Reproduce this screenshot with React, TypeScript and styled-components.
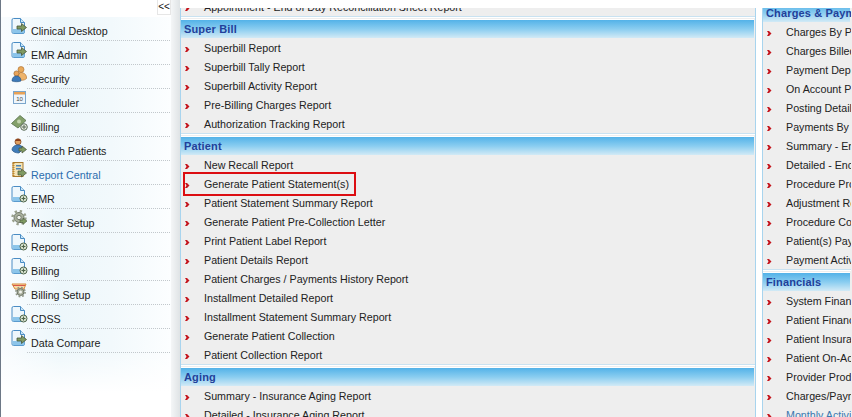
import styled, { createGlobalStyle } from 'styled-components'

const GlobalStyle = createGlobalStyle`
  html, body {
    margin: 0;
    padding: 0;
    background: #fff;
    overflow: hidden;
  }
`

const Page = styled.div`
  display: flex;
  width: 852px;
  height: 417px;
  overflow: hidden;
  font-family: 'Liberation Sans', Arial, sans-serif;
  font-size: 10.7px;
`

const Sidebar = styled.div`
  width: 171px;
  flex: none;
  box-sizing: border-box;
  border-left: 1px solid #6d7886;
  background: #fff;
`

const ToggleBar = styled.div`
  display: flex;
  justify-content: flex-end;
  height: 17px;
`

const Toggle = styled.div`
  width: 14px;
  height: 15px;
  box-sizing: border-box;
  border: 1px solid #e6e6e6;
  border-top: 0;
  color: #111;
  font-size: 10px;
  line-height: 14px;
  text-align: center;
`

const NavList = styled.div`
  padding-bottom: 40px;
  background:
    linear-gradient(to bottom, rgba(255, 255, 255, 0) 88%, #fff 100%),
    linear-gradient(to right, #f9fcfe 0, #edf7fb 35%, #f2f9fc 65%, #fcfeff 100%);
`

const NavRow = styled.div`
  display: flex;
  height: 24px;
  padding-left: 10px;
`

const NavIcon = styled.svg`
  width: 17px;
  height: 17px;
  flex: none;
  margin-top: 1px;
  margin-right: -1px;
`

const NavLabel = styled.div<{ $active?: boolean }>`
  flex: 1;
  margin-right: 1px;
  padding: 8px 0 0 4px;
  box-sizing: border-box;
  height: 24px;
  border-bottom: 1px dotted #c2c8cc;
  line-height: 13px;
  color: ${(p) => (p.$active ? '#2b6cad' : '#1b1b1b')};
  white-space: nowrap;
`

const Shade = styled.div`
  width: 9px;
  flex: none;
  background: linear-gradient(to right, #f4f6f7, #dfe3e5);
`

const Content = styled.div`
  display: flex;
  flex: 1;
  gap: 6px;
  padding-top: 8px;
  min-width: 0;
`

const Column = styled.div<{ $wide?: boolean }>`
  ${(p) => (p.$wide ? 'width: 576px; flex: none;' : 'flex: 1; min-width: 0;')}
  box-sizing: border-box;
  border-left: 1px solid #a8d4ee;
  border-right: 1px solid ${(p) => (p.$wide ? '#a8d4ee' : 'transparent')};
  overflow: hidden;
  background: #eeeeee;
`

const ColumnInner = styled.div<{ $offset: number }>`
  margin-top: ${(p) => p.$offset}px;
`

const Section = styled.div`
  border-bottom: 1px solid #c9e2f1;
  margin-bottom: 2px;
  box-shadow: 0 1px 0 #fff;
`

const SectionHead = styled.div`
  height: 19px;
  box-sizing: border-box;
  margin-right: 1px;
  padding-left: 3px;
  border-top: 1px solid #fff;
  line-height: 18px;
  font-size: 11px;
  letter-spacing: 0.15px;
  font-weight: bold;
  color: #22409a;
  white-space: nowrap;
  background: linear-gradient(to bottom, #53b2e8 0, #8acdf0 50%, #d2eaf6 100%);
`

const ReportRow = styled.div<{ $link?: boolean }>`
  position: relative;
  display: flex;
  align-items: center;
  height: 19px;
  padding-left: 4px;
  color: ${(p) => (p.$link ? '#3a78b0' : '#222')};
  white-space: nowrap;
`

const Bullet = styled.svg`
  width: 5px;
  height: 5px;
  flex: none;
  margin-top: 3px;
  margin-right: 14px;
`

const Highlight = styled.div`
  position: absolute;
  left: 2px;
  top: -2px;
  width: 173px;
  height: 24px;
  box-sizing: border-box;
  border: 2px solid #dc0d12;
`

function DocBase() {
  return (
    <>
      <path d="M2.500.5h7l4 4v9.500a1.500 1.500 0 0 1-1.500 1.500H2.500A1.500 1.500 0 0 1 1 14V2A1.500 1.500 0 0 1 2.500.5z" fill="#eef7fc" stroke="#4a8cc4" />
      <path d="M9.500.5v4h4" fill="#c9e5f6" stroke="#4a8cc4" />
      <path d="M1.500 11h12v3.200a1 1 0 0 1-1 1h-10a1 1 0 0 1-1-1z" fill="#8cc5ea" />
    </>
  )
}

function DocArrow() {
  return (
    <NavIcon viewBox="0 0 17 17">
      <DocBase />
      <path d="M6 8h4.500V5.500L15.500 9.500l-5 4V11H6z" fill="#7f9a62" stroke="#47553a" strokeWidth="0.8" />
    </NavIcon>
  )
}

function DocPlus() {
  return (
    <NavIcon viewBox="0 0 17 17">
      <DocBase />
      <circle cx="12.500" cy="12.500" r="3.500" fill="#dfe9d8" stroke="#4d6348" />
      <path d="M12.500 10.500v4M10.500 12.500h4" stroke="#4d6348" strokeWidth="1.200" />
    </NavIcon>
  )
}

function People() {
  return (
    <NavIcon viewBox="0 0 17 17">
      <circle cx="10" cy="3.500" r="3" fill="#e8a95a" stroke="#a9692a" strokeWidth="0.6" />
      <path d="M7 13c-.5-4 1-6.500 3-6.500S16 8 15.500 12.500c-2 2-6 2.500-8.500.5z" fill="#eeb46c" stroke="#a9692a" strokeWidth="0.6" />
      <circle cx="5.500" cy="7.500" r="2.600" fill="#e9a45a" stroke="#8f5a25" strokeWidth="0.6" />
      <path d="M1 15c0-3.500 2-5 4.500-5S10 11.500 10 15c-2 1-6.500 1-9 0z" fill="#3d79b8" stroke="#24507f" strokeWidth="0.6" />
    </NavIcon>
  )
}

function CalendarIcon() {
  return (
    <NavIcon viewBox="0 0 17 17">
      <rect x="2.500" y="1.500" width="12" height="12" fill="#eef5fb" stroke="#7ba6cc" />
      <rect x="3" y="2" width="11" height="2.500" fill="#e8a257" />
      <text x="8.500" y="11" fontSize="6" fontFamily="'Liberation Sans', sans-serif" textAnchor="middle" fill="#444">10</text>
    </NavIcon>
  )
}

function Money() {
  return (
    <NavIcon viewBox="0 0 17 17">
      <path d="M0.500 9.500L9 1.500l6 5-8 7.500z" fill="#83a06a" stroke="#56704a" strokeWidth="0.8" />
      <circle cx="8" cy="7.500" r="2" fill="#c3d4ae" />
      <circle cx="13" cy="13" r="3.300" fill="#e9efe3" stroke="#5a6a58" />
      <path d="M13 11v4M11 13h4" stroke="#5a6a58" />
    </NavIcon>
  )
}

function UserArrow() {
  return (
    <NavIcon viewBox="0 0 17 17">
      <circle cx="7" cy="3.800" r="3" fill="#e0a060" stroke="#85481f" strokeWidth="0.8" />
      <path d="M7 1a3 3 0 0 1 3 2H4a3 3 0 0 1 3-2z" fill="#8b3f1a" />
      <path d="M1 12c0-3 2.500-5 6-5s5 2 5 4l-4 4c-3 0-6-1-7-3z" fill="#3f7cb9" stroke="#2a5685" strokeWidth="0.7" />
      <path d="M8 10h3V8l4.500 3.500-4.500 3.500v-2H8z" fill="#7f9a62" stroke="#47553a" strokeWidth="0.7" />
    </NavIcon>
  )
}

function ReportBook() {
  return (
    <NavIcon viewBox="0 0 17 17">
      <rect x="2" y="0.500" width="10" height="14" fill="#f4e4b6" stroke="#a8792d" />
      <path d="M2.500 1v13" stroke="#c58a2a" strokeWidth="2" strokeDasharray="1 1" />
      <rect x="5" y="3" width="5" height="1.500" fill="#4f84b4" />
      <rect x="5" y="6" width="5" height="1.500" fill="#4f84b4" />
      <path d="M7 9h3.500V7L15.500 11l-5 4v-2H7z" fill="#7f9a62" stroke="#47553a" strokeWidth="0.7" />
    </NavIcon>
  )
}

function Gear() {
  return (
    <NavIcon viewBox="0 0 17 17">
      <circle cx="8" cy="7.500" r="5" fill="#a9b09d" stroke="#747b6c" />
      <circle cx="8" cy="7.500" r="6.500" fill="none" stroke="#9aa18e" strokeWidth="2.400" strokeDasharray="2.300 2.800" />
      <circle cx="8" cy="7.500" r="2.200" fill="#eef0ea" stroke="#747b6c" />
      <path d="M9 10h3V8l4 3-4 3.500V12.500H9z" fill="#7f9a62" stroke="#47553a" strokeWidth="0.6" />
    </NavIcon>
  )
}

function BillGear() {
  return (
    <NavIcon viewBox="0 0 17 17">
      <path d="M1 2h14L13 7H4z" fill="#f6d9a6" stroke="#d88a3d" />
      <path d="M2 3.500h12" stroke="#d9584a" />
      <circle cx="9.500" cy="10" r="3.500" fill="#a5ab98" stroke="#6e7567" />
      <circle cx="9.500" cy="10" r="4.600" fill="none" stroke="#8f9686" strokeWidth="1.600" strokeDasharray="1.800 1.800" />
      <circle cx="9.500" cy="10" r="1.500" fill="#f2f3ee" />
    </NavIcon>
  )
}

const navItems = [
  { label: 'Clinical Desktop', icon: <DocArrow /> },
  { label: 'EMR Admin', icon: <DocArrow /> },
  { label: 'Security', icon: <People /> },
  { label: 'Scheduler', icon: <CalendarIcon /> },
  { label: 'Billing', icon: <Money /> },
  { label: 'Search Patients', icon: <UserArrow /> },
  { label: 'Report Central', icon: <ReportBook />, active: true },
  { label: 'EMR', icon: <DocPlus /> },
  { label: 'Master Setup', icon: <Gear /> },
  { label: 'Reports', icon: <DocPlus /> },
  { label: 'Billing', icon: <DocPlus /> },
  { label: 'Billing Setup', icon: <BillGear /> },
  { label: 'CDSS', icon: <DocPlus /> },
  { label: 'Data Compare', icon: <DocArrow /> },
]

type Group = { title?: string; rows: string[] }

const leftGroups: Group[] = [
  { rows: ['Appointment - End of Day Reconciliation Sheet Report'] },
  {
    title: 'Super Bill',
    rows: [
      'Superbill Report',
      'Superbill Tally Report',
      'Superbill Activity Report',
      'Pre-Billing Charges Report',
      'Authorization Tracking Report',
    ],
  },
  {
    title: 'Patient',
    rows: [
      'New Recall Report',
      'Generate Patient Statement(s)',
      'Patient Statement Summary Report',
      'Generate Patient Pre-Collection Letter',
      'Print Patient Label Report',
      'Patient Details Report',
      'Patient Charges / Payments History Report',
      'Installment Detailed Report',
      'Installment Statement Summary Report',
      'Generate Patient Collection',
      'Patient Collection Report',
    ],
  },
  {
    title: 'Aging',
    rows: ['Summary - Insurance Aging Report', 'Detailed - Insurance Aging Report'],
  },
]

const rightGroups: Group[] = [
  {
    title: 'Charges & Payments',
    rows: [
      'Charges By Provider',
      'Charges Billed',
      'Payment Deposit',
      'On Account Payments',
      'Posting Detail',
      'Payments By Type',
      'Summary - Encounter',
      'Detailed - Encounter',
      'Procedure Productivity',
      'Adjustment Report',
      'Procedure Code',
      'Patient(s) Payments',
      'Payment Activity',
    ],
  },
  {
    title: 'Financials',
    rows: [
      'System Financial',
      'Patient Financial',
      'Patient Insurance',
      'Patient On-Account',
      'Provider Productivity',
      'Charges/Payments',
      'Monthly Activity',
    ],
  },
]

function ReportColumn({ groups, wide, offset }: { groups: Group[]; wide?: boolean; offset: number }) {
  return (
    <Column $wide={wide}>
      <ColumnInner $offset={offset}>
        {groups.map((group, i) => (
          <Section key={i}>
            {group.title && <SectionHead>{group.title}</SectionHead>}
            {group.rows.map((row) => (
              <ReportRow key={row} $link={row === 'Monthly Activity'}>
                <Bullet viewBox="0 0 5 5">
                  <path d="M0 0h2l2.500 2.500L2 5H0l1.500-2.500z" fill="#c4141c" />
                </Bullet>
                {row}
                {row === 'Generate Patient Statement(s)' && <Highlight />}
              </ReportRow>
            ))}
          </Section>
        ))}
      </ColumnInner>
    </Column>
  )
}

export default function App() {
  return (
    <Page>
      <GlobalStyle />
      <Sidebar>
        <ToggleBar>
          <Toggle>&lt;&lt;</Toggle>
        </ToggleBar>
        <NavList>
          {navItems.map((item, i) => (
            <NavRow key={i}>
              {item.icon}
              <NavLabel $active={item.active}>{item.label}</NavLabel>
            </NavRow>
          ))}
        </NavList>
      </Sidebar>
      <Shade />
      <Content>
        <ReportColumn groups={leftGroups} wide offset={-11} />
        <ReportColumn groups={rightGroups} offset={-5} />
      </Content>
    </Page>
  )
}
